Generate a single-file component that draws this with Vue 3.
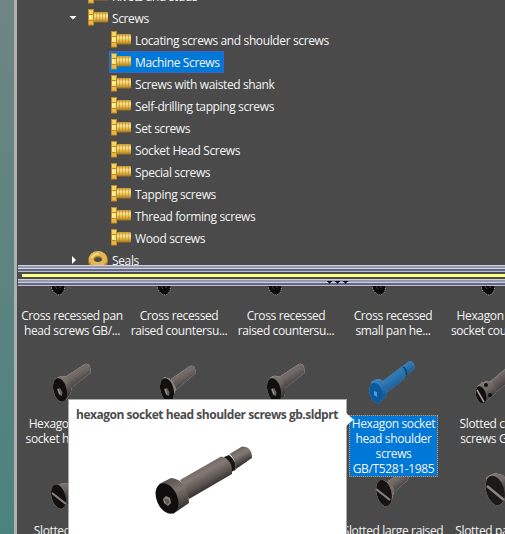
<script setup>
const children = [
  { t: 'Locating screws and shoulder screws' },
  { t: 'Machine Screws', sel: true },
  { t: 'Screws with waisted shank' },
  { t: 'Self-drilling tapping screws' },
  { t: 'Set screws' },
  { t: 'Socket Head Screws' },
  { t: 'Special screws' },
  { t: 'Tapping screws' },
  { t: 'Thread forming screws' },
  { t: 'Wood screws' },
]
const rows = [
  { t: 'Rivets and studs', lvl: 1, icon: 'bolt' },
  { t: 'Screws', lvl: 1, icon: 'bolt', arrow: 'down' },
  ...children.map(c => ({ ...c, lvl: 2, icon: 'bolt' })),
  { t: 'Seals', lvl: 1, icon: 'ring', arrow: 'right' },
]
const items = [
  { kind: 'tip', dx: 0, lines: ['Cross recessed pan', 'head screws GB/...'] },
  { kind: 'tip', dx: -1, lines: ['Cross recessed', 'raised countersu...'] },
  { kind: 'tip', dx: 3, lines: ['Cross recessed', 'raised countersu...'] },
  { kind: 'tip', dx: 0, lines: ['Cross recessed', 'small pan he...'] },
  { kind: 'tip', dx: 2, lines: ['Hexagon lobular', 'socket countersu...'] },
  { kind: 'cap', lines: ['Hexagon lobular', 'socket head cap...'] },
  { kind: 'csk', lines: ['Hexagon'] },
  { kind: 'btn', lines: ['Hexagon'] },
  { kind: 'shoulder', sel: true, lines: ['Hexagon socket', 'head shoulder', 'screws', 'GB/T5281-1985'] },
  { kind: 'capstan', lines: ['Slotted capstan', 'screws GB/T6...'] },
  { kind: 'slot', lines: ['Slotted cheese'] },
  { kind: 'none', lines: ['Slotted'] },
  { kind: 'none', lines: ['Slotted'] },
  { kind: 'slotcsk', lines: ['Slotted large raised'] },
  { kind: 'slotpan', lines: ['Slotted pan head'] },
]
</script>

<template>
  <div class="app">
    <svg width="0" height="0" class="defs">
      <defs>
        <linearGradient id="steel" x1="0.1" y1="0" x2="0.7" y2="1">
          <stop offset="0" stop-color="#857b76" /><stop offset="0.45" stop-color="#716966" /><stop offset="1" stop-color="#2b2827" />
        </linearGradient>
        <linearGradient id="blue" x1="0.1" y1="0" x2="0.7" y2="1">
          <stop offset="0" stop-color="#4187be" /><stop offset="0.5" stop-color="#2c74af" /><stop offset="1" stop-color="#0e4f88" />
        </linearGradient>
        <linearGradient id="gold" x1="0" y1="0" x2="0" y2="1">
          <stop offset="0" stop-color="#c99730" /><stop offset="0.35" stop-color="#fae690" /><stop offset="0.7" stop-color="#dcae40" /><stop offset="1" stop-color="#a0701a" />
        </linearGradient>
        <symbol id="bolt" viewBox="0 0 20 17">
          <rect x="6" y="3" width="14" height="10.500" rx="1" fill="url(#gold)" />
          <path d="M8.5 3v10M11.5 3v10M14.5 3v10M17.5 3v10" stroke="#b17d13" stroke-opacity=".4" />
          <rect x="0" y="0" width="6" height="16.5" fill="#c08c28" />
          <rect x="1" y="1" width="4" height="4" fill="#f0d660" />
          <rect x="1" y="6" width="4" height="5" fill="#fbe37a" />
          <rect x="1" y="12" width="4" height="3.5" fill="#f0b545" />
          <rect x="1" y="6.5" width="2" height="3" fill="#fff4ad" />
        </symbol>
        <symbol id="ring" viewBox="0 0 20 17">
          <ellipse cx="10" cy="9.500" rx="6.900" ry="6.200" fill="none" stroke="#b88428" stroke-width="6" />
          <ellipse cx="10" cy="8" rx="6.800" ry="5.500" fill="none" stroke="#e2b650" stroke-width="4.800" />
          <path d="M3.500 7Q6 2.500 11 2.400" fill="none" stroke="#f4da85" stroke-width="2" />
        </symbol>
      </defs>
    </svg>
    <div class="edge"></div>
    <div class="panel">
      <div class="tree">
        <div v-for="r in rows" :key="r.t" class="row" :class="['l' + r.lvl]">
          <span class="arrow" :class="r.arrow"></span>
          <span class="node" :class="{ sel: r.sel }">
            <svg class="ico" width="20" height="17"><use :href="'#' + r.icon" /></svg>
            <span class="name">{{ r.t }}</span>
          </span>
        </div>
      </div>
      <div class="splitter">
        <div class="band"></div>
        <div class="yellow"></div>
        <div class="band grip">
          <svg width="22" height="3"><path d="M0 0h5v1h-1l-1.500 2l-1.500-2h-1zM8 0h5v1h-1l-1.500 2l-1.500-2h-1zM16 0h5v1h-1l-1.500 2l-1.500-2h-1z" fill="#000" /></svg>
        </div>
      </div>
      <div class="list">
        <div v-for="(it, i) in items" :key="i" class="item">
          <svg class="pic" width="64" height="48" viewBox="0 0 64 48">
            <g v-if="it.kind === 'tip'" :transform="`translate(${it.dx} 0)`">
              <path d="M10.500 30V38Q13 44 18 45Q24 44 23.500 35V30z" fill="#0c0b0a" stroke="#ddd" stroke-width=".8" stroke-dasharray="1 1.500" />
              <path d="M14 36l2 3M19 36v2" stroke="#45403d" />
            </g>
            <g v-else-if="it.kind === 'cap' || it.kind === 'csk' || it.kind === 'btn'">
              <g class="outline">
                <path v-if="it.kind === 'csk'" d="M23 21L42 8Q47 6 48 15L28 32z" fill="url(#steel)" />
                <path v-else d="M24 19L44 6Q50 4 49.500 15L29 31z" fill="url(#steel)" />
                <path v-if="it.kind === 'cap'" d="M14 21L20 18Q30 17 30.500 32Q29 39 22 44z" fill="url(#steel)" />
                <path v-else-if="it.kind === 'btn'" d="M15 20Q21 15 27 21Q32 30 29 39L22 44z" fill="url(#steel)" />
                <path v-else d="M16 19Q26 21 28 31L23 43z" fill="#8b8079" />
                <ellipse cx="19" cy="32" rx="6.700" ry="12" transform="rotate(-14 19 32)" fill="#11100f" />
              </g>
              <path d="M16 31l3-1 2.500 4-.5 4-3-1z" fill="#67605c" /><path d="M17 31l2 5" stroke="#aaa19b" />
            </g>
            <g v-else-if="it.kind === 'shoulder'">
              <g class="outline b">
                <path d="M38 10L47 3.500Q52 2 52.500 11L43 18z" fill="url(#blue)" />
                <path d="M21 23L38 10Q43 11 43 20L26 34z" fill="url(#blue)" />
                <path d="M9 24L15 21Q25 21 25 38L16 45z" fill="url(#blue)" />
                <ellipse cx="14" cy="35" rx="6.300" ry="10.500" transform="rotate(-15 14 35)" fill="#0b5a9d" />
              </g>
              <path d="M41 9Q45 11 44.500 17" fill="none" stroke="#074577" stroke-width="1.500" />
              <path d="M12 33l3 1 0 5-3-2z" fill="#4f9bd2" />
            </g>
            <g v-else-if="it.kind === 'capstan'">
              <g class="outline">
                <path d="M22 23L45 3V20L27 34z" fill="url(#steel)" />
                <path d="M8 29Q14 22 21 23Q28 27 27 35L15 45z" fill="url(#steel)" />
                <ellipse cx="12" cy="37" rx="5" ry="9" transform="rotate(-15 12 37)" fill="#11100f" />
              </g>
              <path d="M8 32l7 12" stroke="#aaa19b" stroke-width="1.500" />
              <circle cx="17" cy="27" r="2" fill="#111" /><circle cx="21" cy="37" r="2" fill="#111" />
            </g>
            <g v-else-if="it.kind === 'slot'">
              <g class="outline">
                <path d="M11 23Q16 18 28 18V38L20 44z" fill="url(#steel)" />
                <ellipse cx="17.500" cy="31.500" rx="7" ry="12.500" transform="rotate(-16 17.500 31.500)" fill="#11100f" />
              </g>
              <path d="M11 28L25 39" stroke="#8b827d" stroke-width="2.200" />
            </g>
            <g v-else-if="it.kind === 'slotcsk'">
              <g class="outline">
                <path d="M26 16L46 4Q49 10 45 16L30 29z" fill="url(#steel)" />
                <path d="M17 15Q28 16 32 23Q32 33 26 41z" fill="#756c67" />
                <ellipse cx="22" cy="28" rx="7.500" ry="13.500" transform="rotate(-14 22 28)" fill="#161413" />
              </g>
              <path d="M14 24L28 35" stroke="#8b827d" stroke-width="2.200" />
            </g>
            <g v-else-if="it.kind === 'slotpan'">
              <g class="outline">
                <path d="M28 12H60V30L34 36z" fill="url(#steel)" />
                <path d="M17 13Q26 5 35 11Q41 25 33 37z" fill="url(#steel)" />
                <ellipse cx="26" cy="25.500" rx="9" ry="15" transform="rotate(-16 26 25.500)" fill="#1c1a19" />
              </g>
              <path d="M18 21L35 35" stroke="#8b827d" stroke-width="2.500" />
            </g>
          </svg>
          <div class="label" :class="{ sel: it.sel }">
            <div v-for="l in it.lines" :key="l">{{ l }}</div>
          </div>
        </div>
      </div>
    </div>
    <div class="tooltip">
      <div class="title">hexagon socket head shoulder screws gb.sldprt</div>
      <svg class="big" width="100" height="72" viewBox="0 0 100 72">
        <defs>
          <linearGradient id="rod" gradientUnits="userSpaceOnUse" x1="46" y1="22" x2="58" y2="44">
            <stop offset="0" stop-color="#746a66" /><stop offset=".25" stop-color="#827975" /><stop offset=".6" stop-color="#5e5653" /><stop offset="1" stop-color="#252120" />
          </linearGradient>
          <linearGradient id="tipg" gradientUnits="userSpaceOnUse" x1="82" y1="4" x2="90" y2="20">
            <stop offset="0" stop-color="#6d6460" /><stop offset=".35" stop-color="#847a76" /><stop offset="1" stop-color="#2b2725" />
          </linearGradient>
          <linearGradient id="headg" gradientUnits="userSpaceOnUse" x1="16" y1="34" x2="30" y2="66">
            <stop offset="0" stop-color="#5c5450" /><stop offset=".35" stop-color="#7d736f" /><stop offset="1" stop-color="#292524" />
          </linearGradient>
        </defs>
        <path d="M69 12L74 10Q82 16 80.500 25L76 27z" fill="#171514" />
        <path d="M74.500 9L87 1.500Q97 1.500 97 13L81 24Q80 13 74.500 9z" fill="url(#tipg)" />
        <path d="M25 35L66 11.500Q78 14 77 29L34 54z" fill="url(#rod)" />
        <path d="M4 39L16 33Q33 35 34 58L18 69z" fill="url(#headg)" />
        <ellipse cx="12" cy="53.500" rx="10.300" ry="16" transform="rotate(-24 12 53.500)" fill="#0f0e0d" />
        <path d="M8 54l3-3 4 2 1 5-3 3-4-3z" fill="#8c837e" /><path d="M9 54l4 0 2 3-3 3z" fill="#5c5653" />
      </svg>
    </div>
    <svg class="pointer" width="10" height="16"><path d="M0 0L8.500 7.500L0 15z" fill="#fff" /></svg>
  </div>
</template>

<style>
body { margin: 0; overflow: hidden; }
</style>
<style scoped>
.app { position: relative; display: flex; width: 505px; height: 534px; overflow: hidden; background: #4a4a4a; color: #f4f4f4; font: 12px/15px "Open Sans", "Noto Sans", sans-serif; letter-spacing: -0.37px; white-space: nowrap; }
.defs { position: absolute; }
.edge { box-sizing: border-box; flex: none; width: 17px; border-right: 3px solid #b0b0b0; background: linear-gradient(#6e8583, #4c827e); }
.panel { flex: 1; min-width: 0; display: flex; flex-direction: column; }
.tree { height: 265px; overflow: hidden; }
.row { height: 22px; display: flex; align-items: center; padding-left: 52px; }
.row:first-child { margin-top: -15px; }
.l2 { padding-left: 75px; }
.arrow { width: 9px; height: 10px; margin-right: 8px; flex: none; }
.arrow.down { height: 5px; background: #fff; clip-path: polygon(0 0, 8px 0, 4px 4px); }
.arrow.right { background: #fff; clip-path: polygon(3px 1px, 7px 5px, 3px 9px); }
.node { display: flex; height: 22px; box-sizing: border-box; align-items: center; gap: 4px; padding: 0 3px 0 1px; border: 1px solid transparent; }
.node.sel { background: #0078d7; border-color: #3d62c8; }
.ico { margin-top: -2px; }
.name { line-height: 18px; padding-top: 2px; }
.splitter { height: 21px; margin-left: 1px; flex: none; }
.band { height: 7px; background: linear-gradient(#cfd1e0 0 1px, #9597ae 1px 3px, #cfd1e0 3px 4px, #646a86 4px 6px, #b9bdd0 6px); }
.yellow { height: 3px; margin: 2px 0 2px 4px; background: #ffff80; }
.grip svg { display: block; padding: 2px 0 0 309px; }
.list { flex: 1; min-height: 0; overflow: hidden; display: grid; grid-template-columns: repeat(5, 107px); grid-auto-rows: 107.5px; margin-left: 2.5px; align-content: start; }
.item { display: flex; flex-direction: column; align-items: center; text-align: center; margin-top: -36px; height: 107px; }
.pic { flex: none; display: block; }
.label { position: relative; margin: 9px 2px 0 0; padding: 0 2px; border: 1px dotted transparent; }
.label.sel { background: #0078d7; border-color: #f09030; margin-right: 1px; }
.outline { filter: drop-shadow(0 0 .5px #ddd); }
.outline.b { filter: drop-shadow(0 0 .5px #59a5df); }
.tooltip { position: absolute; left: 68px; top: 399px; width: 277px; height: 140px; background: #fff; border: 1px solid #aaa; color: #4c4c4c; }
.title { padding: 7px 0 1px 7px; font-weight: 700; letter-spacing: -0.47px; }
.big { display: block; margin: 22px 0 0 86px; }
.pointer { position: absolute; left: 345px; top: 412px; }
</style>
